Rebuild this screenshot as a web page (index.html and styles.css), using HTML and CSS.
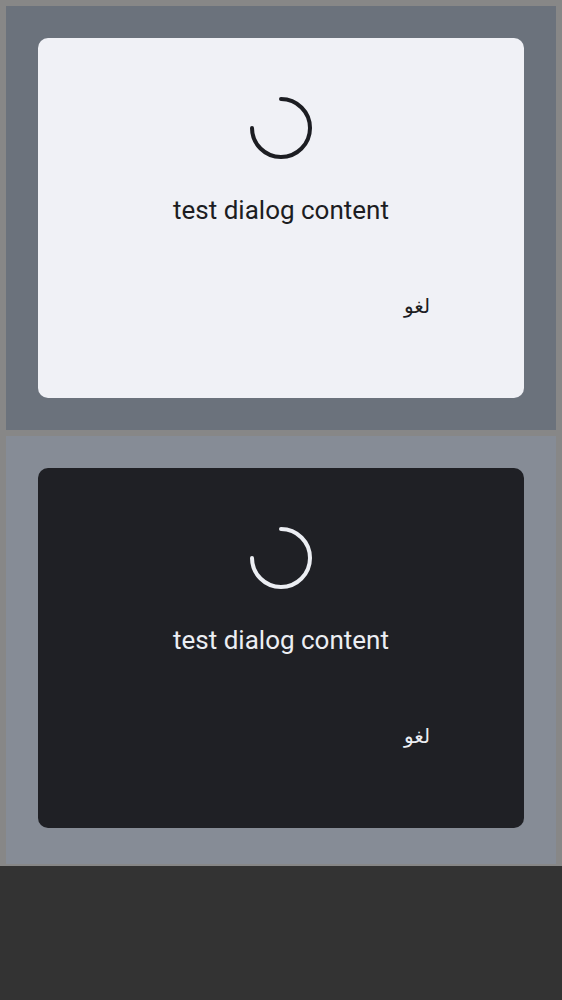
FILE: index.html
```html
<!DOCTYPE html>
<html>
<head>
<meta charset="utf-8">
<link rel="stylesheet" href="styles.css">
</head>
<body>
<div class="frame">
  <section class="panel panel-light">
    <div class="dialog dialog-light">
      <svg class="spinner" width="64" height="64" viewBox="0 0 64 64">
        <path d="M32 3 A29 29 0 1 1 3 32" fill="none" stroke="currentColor" stroke-width="4" stroke-linecap="round"/>
      </svg>
      <div class="content">test dialog content</div>
      <div class="actions"><span class="btn" dir="rtl">لغو</span></div>
    </div>
  </section>
  <section class="panel panel-dark">
    <div class="dialog dialog-dark">
      <svg class="spinner" width="64" height="64" viewBox="0 0 64 64">
        <path d="M32 3 A29 29 0 1 1 3 32" fill="none" stroke="currentColor" stroke-width="4" stroke-linecap="round"/>
      </svg>
      <div class="content">test dialog content</div>
      <div class="actions"><span class="btn" dir="rtl">لغو</span></div>
    </div>
  </section>
</div>
</body>
</html>
```
FILE: styles.css
```css
html, body {
  margin: 0;
  padding: 0;
}
body {
  background: #333333;
  font-family: Roboto, "DejaVu Sans", sans-serif;
  width: 562px;
  height: 1000px;
}
.frame {
  background: #878787;
  padding: 6px 6px 2px 6px;
  display: flex;
  flex-direction: column;
  gap: 6px;
}
.panel {
  padding: 32px 32px 0 32px;
  box-sizing: border-box;
}
.panel-light {
  background: #6b727c;
  height: 424px;
}
.panel-dark {
  background: #868c96;
  height: 428px;
}
.dialog {
  height: 360px;
  border-radius: 10px;
  display: flex;
  flex-direction: column;
  align-items: center;
  padding-top: 58px;
  box-sizing: border-box;
}
.dialog-light {
  background: #f0f1f6;
  color: #1c1d22;
}
.dialog-dark {
  background: #1f2025;
  color: #eceef3;
}
.spinner {
  display: block;
}
.content {
  margin-top: 34px;
  font-size: 26px;
  line-height: 32px;
}
.actions {
  align-self: stretch;
  display: flex;
  justify-content: flex-end;
  padding-right: 94px;
  margin-top: 68px;
}
.btn {
  font-family: "DejaVu Sans", sans-serif;
  font-size: 20px;
  line-height: 24px;
}
```
